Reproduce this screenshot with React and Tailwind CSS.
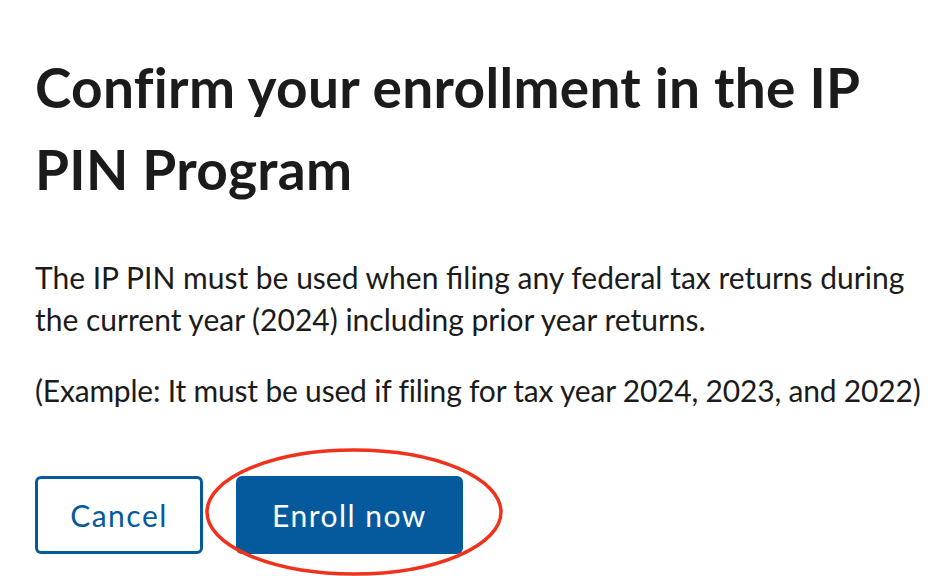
import React from 'react';

const font = { fontFamily: 'Lato, "Open Sans", sans-serif' };

export default function App() {
  return (
    <div className="relative w-[946px] h-[576px] overflow-hidden bg-white text-[#1b1b1b]" style={font}>
      <div className="pl-[35px] pt-[46px] pr-[20px]">
        <h1 className="text-[55px] font-bold leading-[82px] tracking-[0.3px] w-[840px]">
          Confirm your enrollment in the IP PIN Program
        </h1>
        <p className="mt-[46px] text-[30px] leading-[42px] w-[885px]">
          The IP PIN must be used when filing any federal tax returns during the current year (2024) including prior year returns.
        </p>
        <p className="mt-[29px] text-[30px] leading-[42px] tracking-[-0.2px] whitespace-nowrap">
          (Example: It must be used if filing for tax year 2024, 2023, and 2022)
        </p>
        <div className="mt-[65px] flex gap-[33px]">
          <button className="w-[168px] h-[78px] rounded-[6px] border-[3px] border-[#045a9d] text-[#045a9d] text-[30px] tracking-[1.5px]">
            Cancel
          </button>
          <button className="w-[227px] h-[78px] rounded-[6px] bg-[#045a9d] text-white text-[30px] tracking-[1.5px]">
            Enroll now
          </button>
        </div>
      </div>
      <svg className="absolute left-0 top-0 pointer-events-none" width="946" height="576">
        <ellipse cx="354" cy="512" rx="147" ry="62" fill="none" stroke="#f0321d" strokeWidth="3.5" />
      </svg>
    </div>
  );
}
